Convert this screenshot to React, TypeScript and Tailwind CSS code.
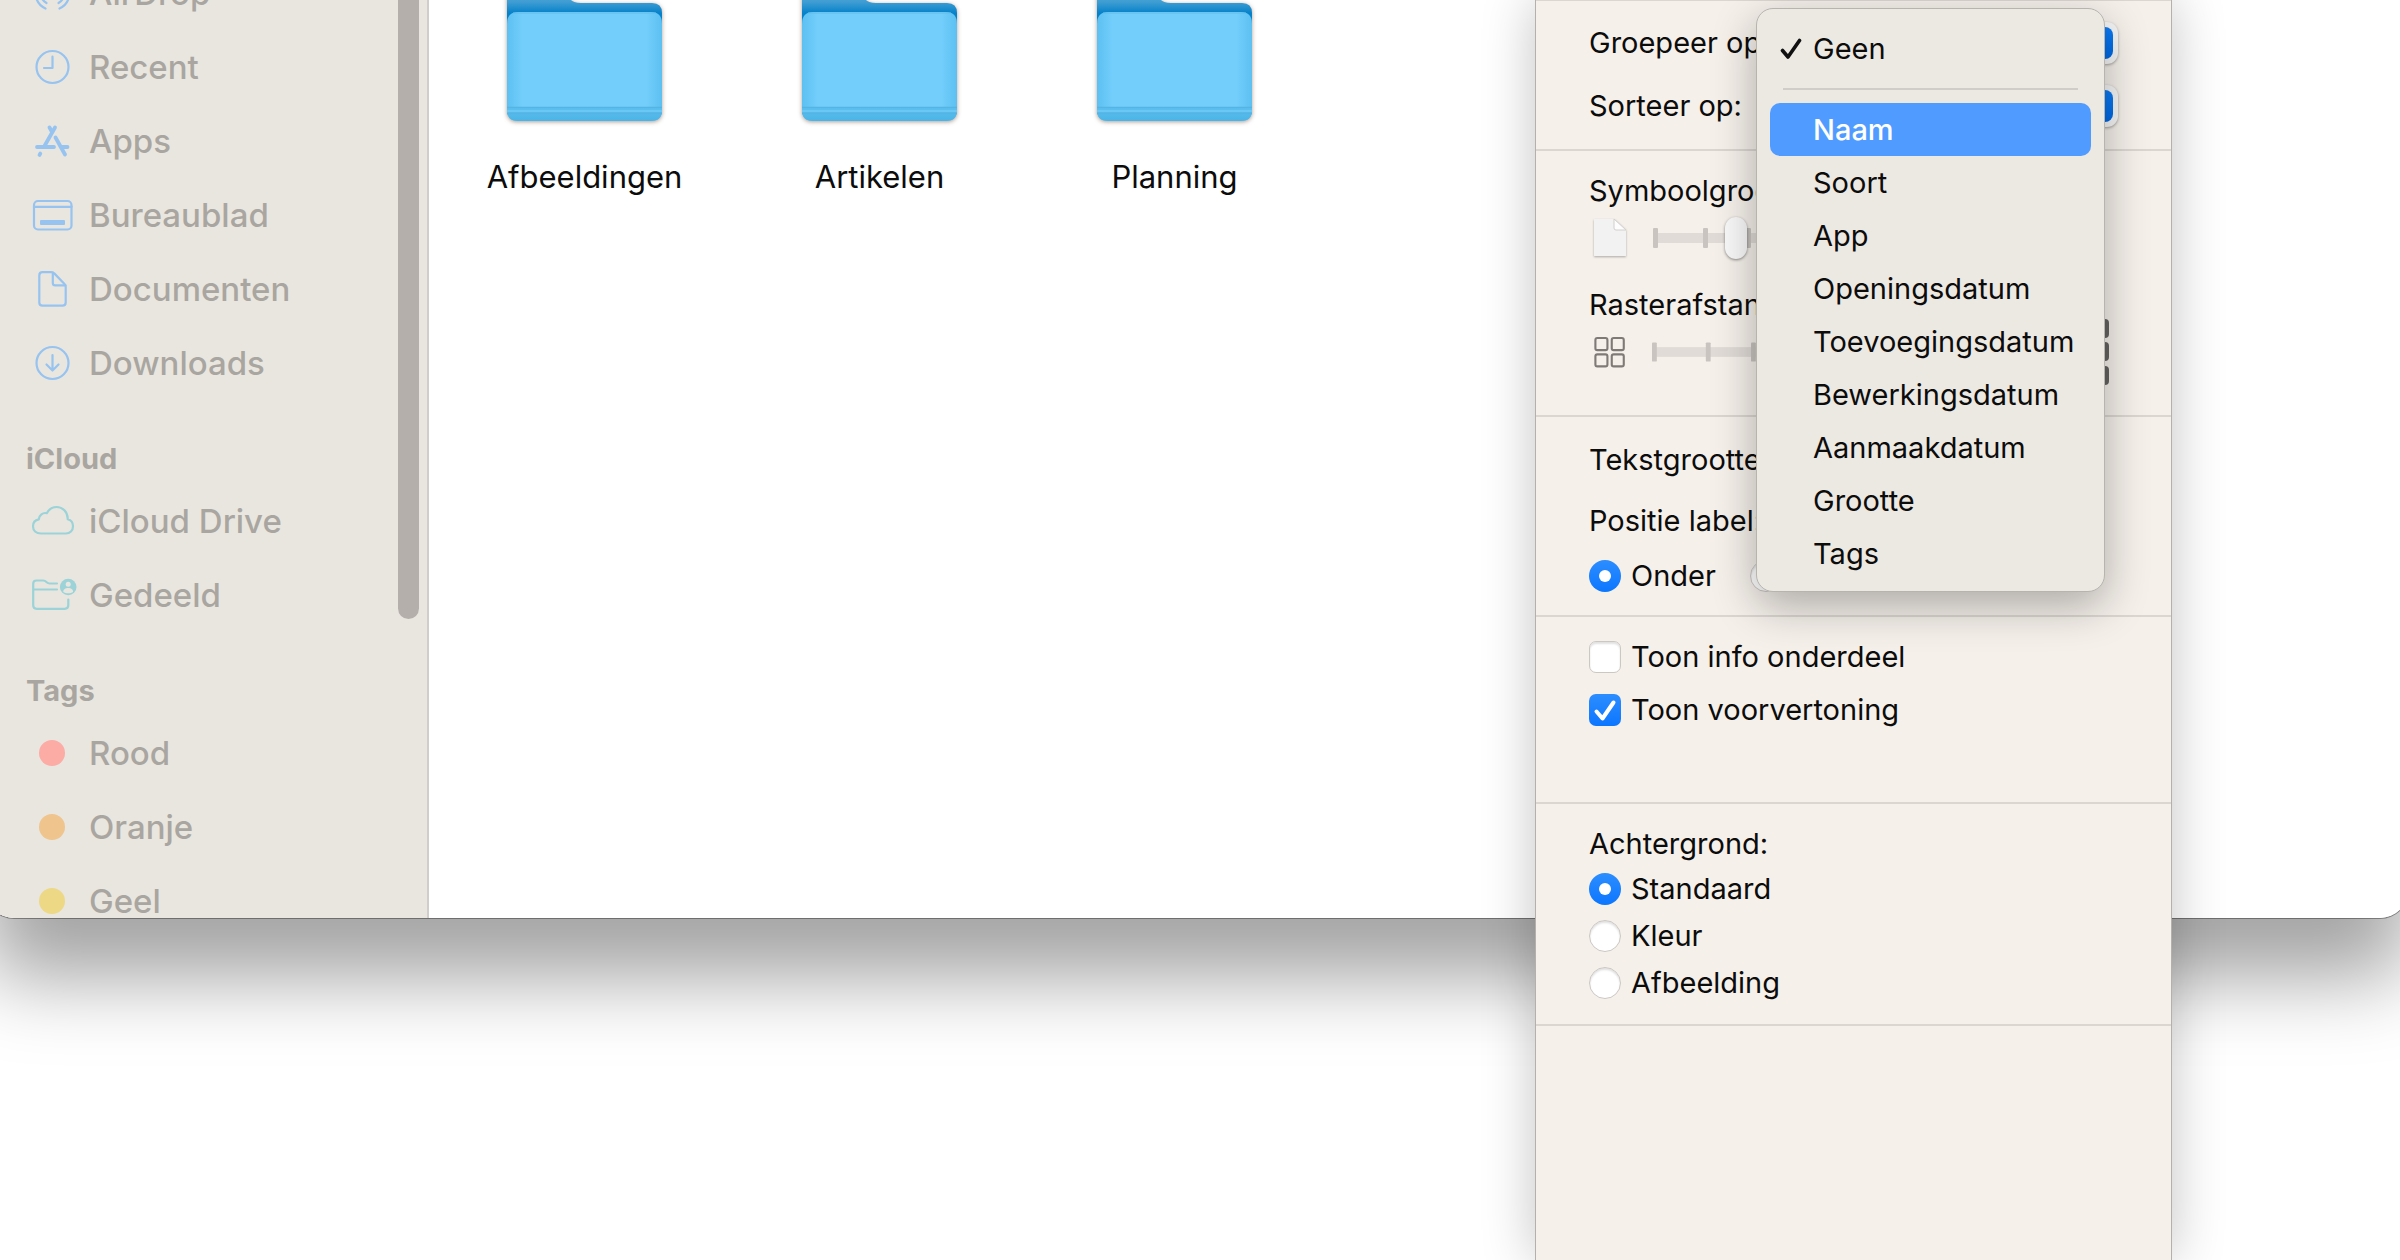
import React, { useState } from 'react';

// --- Sidebar icons ---
interface IconProps {
    children: React.ReactNode;
}

const SidebarIcon: React.FC<IconProps> = ({ children }) => (
    <svg
        viewBox="0 0 42 42"
        className="w-[42px] h-[42px] shrink-0 overflow-visible"
        fill="none"
        stroke="currentColor"
        strokeWidth="2.2"
        strokeLinecap="round"
        strokeLinejoin="round"
        aria-hidden="true"
    >
        {children}
    </svg>
);

const AirDropIcon = () => (
    <SidebarIcon>
        <path d="M14.5 36.5a17 17 0 1 1 14 0" />
        <path d="M15.5 31a12 12 0 1 1 12 0" />
        <path d="M17.5 26.5a7 7 0 1 1 8 0" />
        <circle cx="21.5" cy="21" r="2" fill="currentColor" />
    </SidebarIcon>
);

const RecentIcon = () => (
    <SidebarIcon>
        <circle cx="21.5" cy="21" r="16" />
        <path d="M21.5 10.5v11.5H13" />
    </SidebarIcon>
);

const AppsIcon = () => (
    <SidebarIcon>
        <g strokeWidth="3.8">
            <path d="M24 7.5 13.5 26" />
            <path d="m18.5 7.5 2 3.5" />
            <path d="m24.5 17.5 9.5 17" />
            <path d="M6 27h17M31.5 27h5" />
            <path d="m9.3 33.6-.8 1.3" />
        </g>
    </SidebarIcon>
);

const DesktopIcon = () => (
    <SidebarIcon>
        <rect x="3" y="7" width="37.5" height="28.5" rx="4" />
        <path d="M3 12.8h37.5" />
        <rect x="9" y="26" width="25" height="5" rx="1" fill="currentColor" stroke="none" />
    </SidebarIcon>
);

const DocumentIcon = () => (
    <SidebarIcon>
        <path d="M11.5 4.2h8.500c1.500 0 2.500.4 3.500 1.400l10 10.400c.8.800 1.200 1.800 1.200 3V34.500c0 2-1.200 3.200-3.200 3.200h-20c-2 0-3.200-1.200-3.200-3.200v-27c0-2 1.200-3.300 3.200-3.300z" />
        <path d="M21.8 4.5v10.5c0 1.6.8 2.4 2.4 2.4H34.5" />
    </SidebarIcon>
);

const DownloadIcon = () => (
    <SidebarIcon>
        <circle cx="21.5" cy="21" r="16" />
        <path d="M21.5 13v15M15.5 22.5l6 6 6-6" />
    </SidebarIcon>
);

const CloudIcon = () => (
    <SidebarIcon>
        <path d="M10 33.5C5 33.5 2 30.3 2 26.3c0-3.7 2.4-6.3 5.8-6.9 .3-4.3 4-7.2 8-6.2C17.8 9.5 21 7 25.5 7c6.3 0 11 4.8 11.2 11.3v1c3.3.9 5.3 3.5 5.3 6.9 0 4.2-3 7.3-7.2 7.3z" />
    </SidebarIcon>
);

const SharedIcon = () => (
    <SidebarIcon>
        <path d="M26 9.5H18.5c-1.3 0-1.9-.4-2.8-1.2C14.6 7.2 13.8 6.5 12 6.5H5.5c-2 0-3.3 1.2-3.3 3.3v21.5c0 2.2 1.2 3.5 3.5 3.5h28c2.3 0 3.6-1.3 3.6-3.5V25.5M2.5 15.5H26" />
        <circle cx="37.2" cy="13" r="8.3" fill="currentColor" stroke="none" />
        <circle cx="37.2" cy="10.3" r="2.5" fill="#e9e6df" stroke="none" />
        <path d="M32.3 18c0-3 2.2-4 4.9-4s4.9 1 4.900 4c-2.500 1.800-7.300 1.800-9.800 0z" fill="#e9e6df" stroke="none" />
    </SidebarIcon>
);

const favorites = [
    { label: 'AirDrop', icon: <AirDropIcon /> },
    { label: 'Recent', icon: <RecentIcon /> },
    { label: 'Apps', icon: <AppsIcon /> },
    { label: 'Bureaublad', icon: <DesktopIcon /> },
    { label: 'Documenten', icon: <DocumentIcon /> },
    { label: 'Downloads', icon: <DownloadIcon /> },
];

const icloud = [
    { label: 'iCloud Drive', icon: <CloudIcon /> },
    { label: 'Gedeeld', icon: <SharedIcon /> },
];

const tags = [
    { label: 'Rood', dot: 'bg-[#fcaba5]' },
    { label: 'Oranje', dot: 'bg-[#efc48d]' },
    { label: 'Geel', dot: 'bg-[#edd886]' },
];

const folders = ['Afbeeldingen', 'Artikelen', 'Planning'];

const sortOptions = [
    'Naam',
    'Soort',
    'App',
    'Openingsdatum',
    'Toevoegingsdatum',
    'Bewerkingsdatum',
    'Aanmaakdatum',
    'Grootte',
    'Tags',
];

interface SidebarItemProps {
    label: string;
    children: React.ReactNode;
}

const SidebarItem: React.FC<SidebarItemProps> = ({ label, children }) => (
    <li>
        <a href="#" className="flex items-center h-[74px] gap-4 pl-[45px]">
            {children}
            <span className="text-[33px] leading-[40px] font-medium text-[#a9a6a1]">{label}</span>
        </a>
    </li>
);

const SidebarHeading: React.FC<{ children: string }> = ({ children }) => (
    <h2 className="h-[84px] pt-[42px] pl-[40px] text-[29px] leading-[34px] font-bold text-[#a9a6a1]">{children}</h2>
);

const Sidebar = () => (
    <nav className="relative w-[443px] shrink-0 overflow-hidden bg-[#e9e6df] border-r-2 border-[#d0cecb]">
        <div className="-mt-[44px]">
            <ul className="text-[#97c3f0]">
                {favorites.map(item => (
                    <SidebarItem key={item.label} label={item.label}>{item.icon}</SidebarItem>
                ))}
            </ul>
            <SidebarHeading>iCloud</SidebarHeading>
            <ul className="text-[#9bd3d8]">
                {icloud.map(item => (
                    <SidebarItem key={item.label} label={item.label}>{item.icon}</SidebarItem>
                ))}
            </ul>
            <SidebarHeading>Tags</SidebarHeading>
            <ul>
                {tags.map(tag => (
                    <SidebarItem key={tag.label} label={tag.label}>
                        <span className="flex w-[42px] justify-center">
                            <span className={`w-[26px] h-[26px] rounded-full ${tag.dot}`} />
                        </span>
                    </SidebarItem>
                ))}
            </ul>
        </div>
        <div className="absolute right-[8px] top-0 w-[21px] h-[619px] rounded-b-full bg-[#b4afab]" />
    </nav>
);

const FolderIcon = () => (
    <svg viewBox="0 0 160 146" className="w-[160px] h-[146px] overflow-visible drop-shadow-[0_1px_2px_rgba(90,60,40,0.5)]" aria-hidden="true">
        <defs>
            <linearGradient id="folder-back" gradientUnits="userSpaceOnUse" x1="0" y1="12" x2="0" y2="60">
                <stop offset="0" stopColor="#5fb0dc" />
                <stop offset="0.25" stopColor="#3f9dd2" />
                <stop offset="0.48" stopColor="#0682ca" />
                <stop offset="1" stopColor="#0680c8" />
            </linearGradient>
            <linearGradient id="folder-front" x1="0" y1="0" x2="1" y2="0">
                <stop offset="0" stopColor="#5cc0f1" />
                <stop offset="0.1" stopColor="#73cefb" />
                <stop offset="0.9" stopColor="#73cefb" />
                <stop offset="1" stopColor="#5cc0f1" />
            </linearGradient>
            <linearGradient id="folder-foot" x1="0" y1="0" x2="0" y2="1">
                <stop offset="0" stopColor="#5cc0f0" />
                <stop offset="1" stopColor="#4bb3e6" />
            </linearGradient>
        </defs>
        <path d="M2 60V22Q2 12 12 12H52c6 0 9 4 13 9q3 4 11 4H147q10 0 10 10V60z" fill="url(#folder-back)" />
        <path d="M2 46Q2 34 13 34H146Q157 34 157 46V132Q157 143 146 143H13Q2 143 2 132z" fill="url(#folder-front)" />
        <path d="M2 130H157v2Q157 143 146 143H13Q2 143 2 132z" fill="url(#folder-foot)" />
        <path d="M2 129.5H157M2 135.5H157" stroke="#55b4e2" strokeWidth="1.5" />
        <path d="M2 133H157" stroke="#6bc8f5" strokeWidth="2" />
        <path d="M8 35H151" stroke="#62bcea" strokeWidth="1" />
    </svg>
);

// --- View options panel ---
interface SectionProps {
    className: string;
    children: React.ReactNode;
}

const Section: React.FC<SectionProps> = ({ className, children }) => (
    <section className={`border-t-2 border-[#dbd6d0] px-[53px] ${className}`}>{children}</section>
);

interface PopupSelectProps {
    id: string;
    label: string;
}

const PopupSelect: React.FC<PopupSelectProps> = ({ id, label }) => (
    <div className="flex items-center h-[63px] gap-4">
        <label htmlFor={id} className="shrink-0">{label}</label>
        <div className="relative ml-auto w-[340px]">
            <select
                id={id}
                className="block w-full h-[42px] appearance-none rounded-[11px] bg-[#f6f6f7] px-4 text-[26px] leading-[34px] shadow-[0_1px_3px_rgba(0,0,0,0.35)]"
            >
                <option>Geen</option>
            </select>
            <span className="absolute right-[5px] top-[5px] w-[32px] h-[32px] rounded-[8px] bg-linear-to-b from-[#0c7bf5] to-[#0068e6] pointer-events-none" />
        </div>
    </div>
);

interface TickSliderProps {
    label: string;
    ticks: number[];
    initial: number;
}

const TickSlider: React.FC<TickSliderProps> = ({ label, ticks, initial }) => {
    const [value, setValue] = useState(initial);
    return (
        <div className="relative w-[380px] h-[42px]">
            <svg viewBox="0 0 380 42" className="block w-full h-full" aria-hidden="true">
                <rect x="2" y="16" width="376" height="10" fill="#e0dbd6" />
                {ticks.map(x => (
                    <rect key={x} x={x} y="11" width="5" height="20" rx="1" fill="#c9c4bf" />
                ))}
            </svg>
            <input
                type="range"
                aria-label={label}
                value={value}
                onChange={e => setValue(Number(e.target.value))}
                className="absolute inset-0 w-full h-full appearance-none bg-transparent [&::-webkit-slider-thumb]:appearance-none [&::-webkit-slider-thumb]:w-[22px] [&::-webkit-slider-thumb]:h-[42px] [&::-webkit-slider-thumb]:rounded-full [&::-webkit-slider-thumb]:bg-[#f8f8f8] [&::-webkit-slider-thumb]:shadow-[0_1px_3px_rgba(0,0,0,0.45)]"
            />
        </div>
    );
};

const FileIcon = () => (
    <svg viewBox="0 0 34 40" className="w-[34px] h-[40px] drop-shadow-[0_1px_1px_rgba(0,0,0,0.3)]" aria-hidden="true">
        <path d="M1 1h20l12 11v26H1z" fill="#f2f2f2" />
        <path d="M21 1l12 11H23q-2 0-2-2z" fill="#fdfdfd" stroke="#d2d0ce" strokeWidth="1" />
    </svg>
);

const SmallGridIcon = () => (
    <svg viewBox="0 0 34 34" className="w-[34px] h-[34px]" fill="none" stroke="#7f7a76" strokeWidth="2.2" aria-hidden="true">
        <rect x="2.500" y="2.500" width="12.500" height="12.500" rx="2" />
        <rect x="19.500" y="2.500" width="12.500" height="12.500" rx="2" />
        <rect x="2.500" y="19.500" width="12.500" height="12.500" rx="2" />
        <rect x="19.500" y="19.500" width="12.500" height="12.500" rx="2" />
    </svg>
);

const LargeGridIcon = () => (
    <svg viewBox="0 0 66 66" className="w-[66px] h-[66px]" fill="#666461" aria-hidden="true">
        {[0, 23, 47].map(y =>
            [0, 23, 47].map(x => <rect key={`${x}-${y}`} x={x} y={y} width="19" height="19" rx="4" />)
        )}
    </svg>
);

interface ChoiceProps {
    type: 'radio' | 'checkbox';
    name: string;
    label: string;
    defaultChecked?: boolean;
}

const Choice: React.FC<ChoiceProps> = ({ type, name, label, defaultChecked }) => (
    <label className="flex items-center gap-[10px]">
        <span className="relative w-[32px] h-[32px] shrink-0">
            <input
                type={type}
                name={name}
                defaultChecked={defaultChecked}
                className={`peer block w-full h-full appearance-none border border-[#cbc7c3] bg-white shadow-[inset_0_2px_2px_rgba(0,0,0,0.12)] checked:border-0 checked:bg-linear-to-b checked:from-[#2b8dff] checked:to-[#0a76ff] checked:shadow-none ${type === 'radio' ? 'rounded-full' : 'rounded-[7px]'}`}
            />
            {type === 'radio' ? (
                <span className="absolute inset-[10px] hidden rounded-full bg-white pointer-events-none peer-checked:block" />
            ) : (
                <svg viewBox="0 0 32 32" className="absolute inset-0 hidden pointer-events-none peer-checked:block" aria-hidden="true">
                    <path d="M7.500 17.500 13.500 24.500 24.500 8.500" fill="none" stroke="#fff" strokeWidth="4" strokeLinecap="round" strokeLinejoin="round" />
                </svg>
            )}
        </span>
        {label}
    </label>
);

const SortMenu = () => (
    <div
        role="menu"
        className="absolute left-[220px] top-[9px] w-[349px] rounded-[17px] border border-[#b7b4b0] bg-[#ece8e2] px-[13px] pt-[13px] pb-[11px] shadow-[0_14px_44px_rgba(0,0,0,0.3)]"
    >
        <button type="button" role="menuitemradio" aria-checked="true" className="flex items-center w-full h-[53px] pl-[10px] text-left">
            <svg viewBox="0 0 22 22" className="w-[22px] h-[22px] mr-[11px]" aria-hidden="true">
                <path d="M2.500 12.500 8 19 19.500 2.500" fill="none" stroke="#111" strokeWidth="3.600" strokeLinecap="round" strokeLinejoin="round" />
            </svg>
            Geen
        </button>
        <div role="separator" className="mx-[13px] my-[13px] h-[2px] bg-[#d0ccc8]" />
        {sortOptions.map(option => (
            <button
                key={option}
                type="button"
                role="menuitemradio"
                aria-checked="false"
                className={`flex items-center w-full h-[53px] pl-[43px] rounded-[10px] text-left ${option === 'Naam' ? 'bg-[#509bff] text-white font-medium' : ''}`}
            >
                {option}
            </button>
        ))}
    </div>
);

const ViewOptions = () => (
    <aside className="absolute right-[228px] -top-px bottom-0 w-[637px] border-x border-[#b3b1ae] bg-[#f5f0ea] text-[29px] leading-[34px] text-[#0c0c0c] shadow-[0_0_50px_rgba(0,0,0,0.24)]">
        <Section className="h-[150px] pt-[10px]">
            <PopupSelect id="group-by" label="Groepeer op:" />
            <PopupSelect id="sort-by" label="Sorteer op:" />
        </Section>
        <Section className="h-[266px] pt-[23px]">
            <p>Symboolgrootte:</p>
            <div className="flex items-center h-[60px] gap-[26px] pl-[4px]">
                <FileIcon />
                <TickSlider label="Symboolgrootte" ticks={[0, 50, 93, 143, 193, 243, 293, 343, 375]} initial={20} />
            </div>
            <p className="mt-[20px]">Rasterafstand:</p>
            <div className="flex items-center h-[60px] gap-[26px] pl-[4px]">
                <SmallGridIcon />
                <TickSlider label="Rasterafstand" ticks={[0, 56, 103, 159, 215, 271, 327, 375]} initial={50} />
                <span className="ml-auto mr-[9px]">
                    <LargeGridIcon />
                </span>
            </div>
        </Section>
        <Section className="h-[200px] pt-[26px]">
            <div className="flex items-center h-[34px] gap-4">
                <label htmlFor="text-size" className="shrink-0">Tekstgrootte:</label>
                <select id="text-size" className="w-[96px] h-[34px] appearance-none rounded-[8px] bg-white px-3 text-[26px] leading-[34px]">
                    <option>12</option>
                </select>
            </div>
            <p className="mt-[27px]">Positie label:</p>
            <div className="flex mt-[21px] gap-[34px]">
                <Choice type="radio" name="label-position" label="Onder" defaultChecked />
                <Choice type="radio" name="label-position" label="Rechts" />
            </div>
        </Section>
        <Section className="flex flex-col h-[187px] pt-[23px] gap-[19px]">
            <Choice type="checkbox" name="show-info" label="Toon info onderdeel" />
            <Choice type="checkbox" name="show-preview" label="Toon voorvertoning" defaultChecked />
        </Section>
        <Section className="flex flex-col h-[222px] pt-[23px]">
            <p>Achtergrond:</p>
            <div className="flex flex-col mt-[11px] gap-[13px]">
                <Choice type="radio" name="background" label="Standaard" defaultChecked />
                <Choice type="radio" name="background" label="Kleur" />
                <Choice type="radio" name="background" label="Afbeelding" />
            </div>
        </Section>
        <div className="border-t-2 border-[#dbd6d0]" />
        <SortMenu />
    </aside>
);

const App = () => (
    <div className="relative flex flex-col h-screen overflow-hidden bg-white font-[Inter,'Liberation_Sans',sans-serif]">
        <div className="flex flex-1 min-h-0 -ml-[14px] -mr-[8px] mb-[342px] rounded-b-[28px] shadow-[0_0_0_1px_rgba(0,0,0,0.35),0_60px_80px_rgba(0,0,0,0.36)]">
            <div className="flex flex-1 overflow-hidden rounded-b-[28px] bg-white">
                <Sidebar />
                <main className="flex flex-wrap flex-1 items-start pl-[8px]">
                    {folders.map(name => (
                        <button key={name} type="button" className="flex flex-col items-center w-[295px] -mt-[22px] gap-[35px]">
                            <FolderIcon />
                            <span className="text-[31px] leading-[36px] text-[#0c0c0c]">{name}</span>
                        </button>
                    ))}
                </main>
            </div>
        </div>
        <ViewOptions />
    </div>
);

export default App;
